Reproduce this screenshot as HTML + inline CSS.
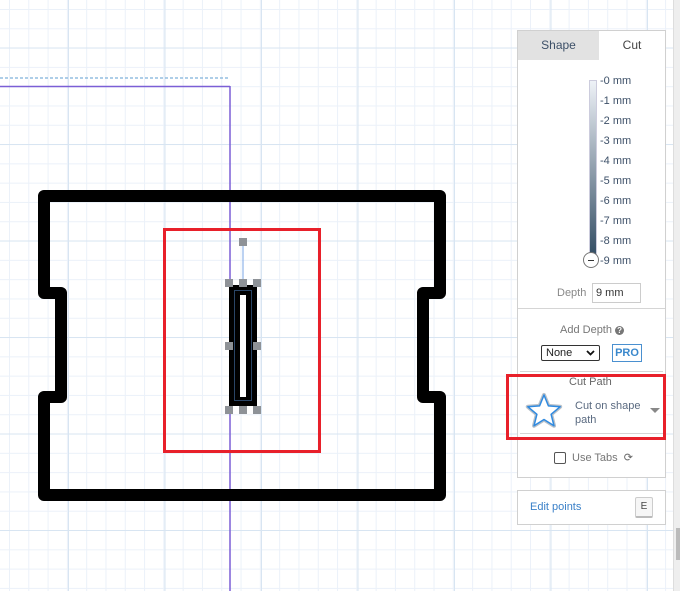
<!DOCTYPE html>
<html><head><meta charset="utf-8"><style>
body{margin:0;width:680px;height:591px;overflow:hidden;position:relative;font-family:"Liberation Sans",sans-serif;background:#fff;}
.grid{position:absolute;left:0;top:0;width:680px;height:591px;
background-image:
linear-gradient(to right,#d8e5f2 1px,transparent 1px),
linear-gradient(to bottom,#d8e5f2 1px,transparent 1px),
linear-gradient(to right,#ebf1f9 1px,transparent 1px),
linear-gradient(to bottom,#ebf1f9 1px,transparent 1px);
background-size:96.5px 96.5px,96.5px 96.5px,19.3px 19.3px,19.3px 19.3px;
background-position:68px 0,0 47.5px,9px 0,0 9px;}
.abs{position:absolute}
.panel{position:absolute;left:517px;top:30px;width:149px;height:448px;border:1px solid #d0d0d0;background:#fff;box-sizing:border-box}
.lbl{position:absolute;left:600px;font-size:11px;color:#3d5068}
.sep{position:absolute;left:518px;width:147px;height:1px;background:#d5d5d5}
</style></head><body>
<div class="grid"></div>
<div class="abs" style="left:673px;top:0;width:7px;height:591px;background:#eeeeee;border-left:1px solid #ddd"></div>
<div class="abs" style="left:676px;top:528px;width:4px;height:32px;background:#bbb"></div>
<svg class="abs" style="left:0;top:0" width="680" height="591">
<line x1="0" y1="78" x2="230" y2="78" stroke="#93bde0" stroke-width="1.5" stroke-dasharray="3,2"/>
<line x1="0" y1="86.5" x2="230" y2="86.5" stroke="#7b5fd6" stroke-width="1.5"/>
<line x1="230" y1="86" x2="230" y2="591" stroke="#7b5fd6" stroke-width="1.5"/>
<path d="M44,196 H440 V293 H423 V397 H440 V495 H44 V397 H61 V293 H44 Z" fill="none" stroke="#000" stroke-width="12" stroke-linejoin="round"/>
<rect x="164.5" y="229.5" width="155" height="222" fill="none" stroke="#e8202a" stroke-width="3"/>
<line x1="243" y1="242" x2="243" y2="283" stroke="#7aa6e6" stroke-width="1"/>
<rect x="229" y="285" width="28" height="121" fill="#000"/>
<rect x="234.5" y="290.5" width="17" height="110" fill="none" stroke="#2a4566" stroke-width="1"/>
<rect x="240" y="295" width="6" height="102" fill="#fff"/>
<g fill="#8e9297">
<rect x="239" y="238" width="8" height="8"/>
<rect x="225" y="279" width="8" height="8"/><rect x="239" y="279" width="8" height="8"/><rect x="253" y="279" width="8" height="8"/>
<rect x="225" y="342" width="8" height="8"/><rect x="253" y="342" width="8" height="8"/>
<rect x="225" y="406" width="8" height="8"/><rect x="239" y="406" width="8" height="8"/><rect x="253" y="406" width="8" height="8"/>
</g>
</svg>
<div class="panel"></div>
<div class="abs" style="left:518px;top:31px;width:81px;height:29px;background:#e2e2e2;font-size:12px;color:#3d5068;text-align:center;line-height:29px">Shape</div>
<div class="abs" style="left:599px;top:31px;width:66px;height:29px;font-size:12px;color:#444;text-align:center;line-height:29px">Cut</div>
<div class="abs" style="left:589px;top:80px;width:6px;height:180px;background:linear-gradient(#eef2f7,#2d485f);border:1px solid #ccd"></div>
<div class="abs" style="left:583px;top:252px;width:16px;height:16px;border-radius:50%;border:1px solid #777;background:#fff;box-sizing:border-box"><div style="position:absolute;left:4px;top:7px;width:6px;height:1px;background:#333"></div></div>
<div class="lbl" style="top:75px">-0 mm</div><div class="lbl" style="top:95px">-1 mm</div><div class="lbl" style="top:115px">-2 mm</div><div class="lbl" style="top:135px">-3 mm</div><div class="lbl" style="top:155px">-4 mm</div><div class="lbl" style="top:175px">-5 mm</div><div class="lbl" style="top:195px">-6 mm</div><div class="lbl" style="top:215px">-7 mm</div><div class="lbl" style="top:235px">-8 mm</div><div class="lbl" style="top:255px">-9 mm</div>
<div class="abs" style="left:557px;top:287px;font-size:11px;color:#888">Depth</div>
<div class="abs" style="left:592px;top:283px;width:49px;height:20px;border:1px solid #ccc;box-sizing:border-box;font-size:11px;color:#333;padding:3px 0 0 3px">9 mm</div>
<div class="sep" style="top:308px"></div>
<div class="abs" style="left:560px;top:324px;font-size:11px;color:#777">Add Depth <span style="display:inline-block;width:9px;height:9px;border-radius:50%;background:#777;color:#fff;font-size:8px;text-align:center;line-height:9px;font-weight:bold">?</span></div>
<div class="abs" style="left:541px;top:345px;width:59px;height:16px;border:1px solid #333;box-sizing:border-box;font-size:11px;color:#222;padding:1px 0 0 4px;border-radius:2px">None <svg style="position:absolute;right:4px;top:4px" width="9" height="6"><path d="M1,1 L4.5,4.5 L8,1" fill="none" stroke="#111" stroke-width="1.8"/></svg></div>
<div class="abs" style="left:612px;top:344px;width:30px;height:18px;border:1px solid #4a90d0;box-sizing:border-box;font-size:11px;font-weight:bold;color:#3a88cc;text-align:center;line-height:16px">PRO</div>
<div class="sep" style="top:371px;left:520px;width:143px"></div>
<div class="abs" style="left:569px;top:376px;font-size:11px;color:#666">Cut Path</div>
<svg class="abs" style="left:0;top:0" width="680" height="591">
<polygon points="544,395 548.4,405.9 560.2,406.7 551.1,414.3 554,425.8 544,419.5 534,425.8 536.9,414.3 527.8,406.7 539.6,405.9" fill="none" stroke="#b8c0c8" stroke-width="4" stroke-linejoin="round"/>
<polygon points="544,395 548.4,405.9 560.2,406.7 551.1,414.3 554,425.8 544,419.5 534,425.8 536.9,414.3 527.8,406.7 539.6,405.9" fill="#fff" stroke="#2f8ae0" stroke-width="1.5" stroke-linejoin="round"/>
<polygon points="650,408 660,408 655,413" fill="#888"/>
<rect x="507.5" y="375.5" width="157" height="63" fill="none" stroke="#e8202a" stroke-width="3"/>
</svg>
<div class="abs" style="left:575px;top:399px;font-size:11px;color:#5a6a80;line-height:14px">Cut on shape<br>path</div>
<div class="sep" style="top:433px;left:520px;width:143px"></div>
<div class="abs" style="left:554px;top:452px;width:12px;height:12px;border:1px solid #555;border-radius:2px;box-sizing:border-box"></div>
<div class="abs" style="left:572px;top:451px;font-size:11px;color:#777">Use Tabs <span style="font-size:11px;color:#666;margin-left:3px">&#10227;</span></div>
<div class="abs" style="left:517px;top:490px;width:149px;height:35px;border:1px solid #d0d0d0;box-sizing:border-box;background:#fff"></div>
<div class="abs" style="left:530px;top:501px;font-size:11px;color:#3a80c8">Edit points</div>
<div class="abs" style="left:635px;top:497px;width:18px;height:21px;border:1px solid #ccc;border-bottom:2px solid #bbb;border-radius:2px;box-sizing:border-box;background:#f6f6f6;font-size:10px;color:#444;text-align:center;line-height:18px">E</div>
</body></html>
